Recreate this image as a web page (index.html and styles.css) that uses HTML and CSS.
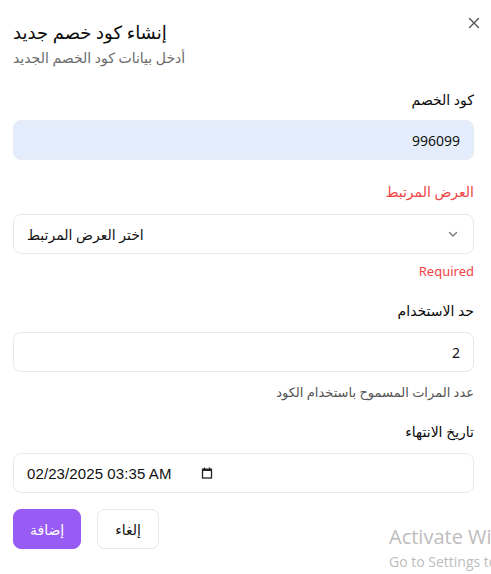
FILE: index.html
```html
<!DOCTYPE html>
<html lang="ar" dir="rtl">
<head>
<meta charset="utf-8">
<title>إنشاء كود خصم جديد</title>
<link rel="stylesheet" href="styles.css">
</head>
<body>
<div class="dialog">
  <button class="close" type="button" aria-label="إغلاق">
    <svg width="16" height="16" viewBox="0 0 16 16" fill="none" stroke="#555" stroke-width="1.4" stroke-linecap="round"><path d="M3.5 3.5l9 9M12.5 3.5l-9 9"/></svg>
  </button>
  <header class="head">
    <h2 class="title">إنشاء كود خصم جديد</h2>
    <p class="subtitle">أدخل بيانات كود الخصم الجديد</p>
  </header>
  <form class="form">
    <div class="field">
      <label class="label">كود الخصم</label>
      <input class="input autofill" type="text" value="996099">
    </div>
    <div class="field">
      <label class="label error sp12">العرض المرتبط</label>
      <button class="select" type="button">
        <svg width="16" height="16" viewBox="0 0 16 16" fill="none" stroke="#777" stroke-width="1.3" stroke-linecap="round" stroke-linejoin="round"><path d="M4.5 6.5l3.5 3.5 3.5-3.5"/></svg>
        <span>اختر العرض المرتبط</span>
      </button>
      <p class="msg">Required</p>
    </div>
    <div class="field">
      <label class="label sp11">حد الاستخدام</label>
      <input class="input" type="text" value="2">
      <p class="help">عدد المرات المسموح باستخدام الكود</p>
    </div>
    <div class="field tight">
      <label class="label sp11">تاريخ الانتهاء</label>
      <div class="input date">
        <span class="date-text">02/23/2025 03:35 AM</span>
        <svg class="cal" width="12" height="12" viewBox="0 0 12 12" fill="none"><rect x="1.5" y="2.5" width="9" height="8.5" stroke="#222" stroke-width="1.3"/><rect x="1" y="1.6" width="10" height="2.4" fill="#222"/><path d="M3.5 0.5v2M8.5 0.5v2" stroke="#222" stroke-width="1.2"/></svg>
      </div>
    </div>
    <div class="actions">
      <button class="btn ghost" type="button">إلغاء</button>
      <button class="btn primary" type="submit">إضافة</button>
    </div>
  </form>
</div>
<div class="watermark">
  <div class="wm1">Activate Windows</div>
  <div class="wm2">Go to Settings to activate Windows.</div>
</div>
</body>
</html>
```
FILE: styles.css
```css
html, body {
  margin: 0;
  padding: 0;
  background: #fff;
  overflow: hidden;
  height: 100%;
}
body {
  font-family: "Noto Sans", "DejaVu Sans", sans-serif;
  color: #111;
  font-size: 14px;
}
.dialog {
  position: relative;
  padding: 18px 17px 0 13px;
}
.close {
  position: absolute;
  top: 15px;
  left: 466px;
  width: 16px;
  height: 16px;
  padding: 0;
  border: 0;
  background: none;
  display: flex;
}
.head {
  display: flex;
  flex-direction: column;
  gap: 2px;
  text-align: left;
}
.title {
  margin: 0;
  font-size: 18px;
  line-height: 28px;
  font-weight: 400;
  color: #0a0a0a;
}
.subtitle {
  margin: 0;
  font-size: 14px;
  line-height: 20px;
  color: #6b6b6b;
}
.form {
  display: flex;
  flex-direction: column;
  margin-top: 22px;
  gap: 22px;
}
.field {
  display: flex;
  flex-direction: column;
}
.field.tight { margin-top: -2px; }
.label {
  font-size: 14px;
  line-height: 20px;
  margin-bottom: 10px;
  color: #0a0a0a;
}
.label.sp12 { margin-bottom: 12px; }
.label.sp11 { margin-bottom: 11px; }
.label.error { color: #ef4444; }
.input {
  box-sizing: border-box;
  height: 40px;
  width: 100%;
  border: 1px solid #e8e8e8;
  border-radius: 8px;
  padding: 0 13px;
  font: inherit;
  font-size: 14px;
  color: #111;
  background: #fff;
  outline: none;
}
.input.autofill {
  background: #e3edfb;
  border-color: #e6ebf2;
}
.select {
  box-sizing: border-box;
  height: 40px;
  width: 100%;
  border: 1px solid #e8e8e8;
  border-radius: 8px;
  padding: 0 12px 0 13px;
  background: #fff;
  display: flex;
  justify-content: space-between;
  align-items: center;
  font: inherit;
  font-size: 14px;
  color: #111;
}
.msg {
  margin: 9px 0 0;
  font-size: 13px;
  line-height: 16px;
  color: #ef4444;
}
.help {
  margin: 10px 0 0;
  font-size: 13px;
  line-height: 20px;
  color: #555;
}
.date {
  direction: ltr;
  display: flex;
  align-items: center;
  gap: 29px;
}
.date-text {
  font-family: "Liberation Sans", sans-serif;
  font-size: 15px;
  letter-spacing: 0.1px;
  color: #111;
}
.cal { flex: none; }
.actions {
  display: flex;
  justify-content: flex-end;
  gap: 16px;
  margin-top: -6px;
}
.btn {
  height: 40px;
  border-radius: 8px;
  font: inherit;
  font-size: 14px;
}
.ghost {
  background: #fff;
  border: 1px solid #e8e8e8;
  color: #111;
  padding: 0 17px;
}
.primary {
  background: #985cf4;
  border: 1px solid #985cf4;
  color: #fff;
  padding: 0 16px;
}
.watermark {
  position: absolute;
  left: 389px;
  top: 524px;
  direction: ltr;
  white-space: nowrap;
  color: #bdbdbd;
  font-family: "Open Sans", sans-serif;
  pointer-events: none;
}
.wm1 { font-size: 20px; line-height: 26px; }
.wm2 { font-size: 14px; line-height: 20px; margin-top: 2px; }
```
